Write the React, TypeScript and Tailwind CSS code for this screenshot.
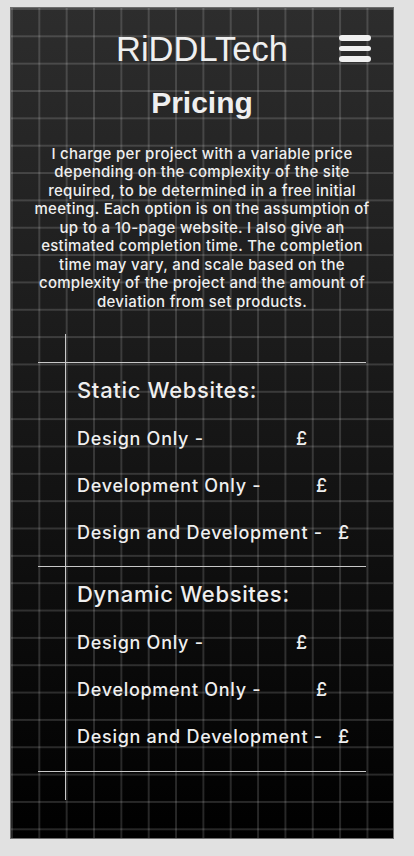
import React from "react";

const line = "border-[#c8c8c8]";

const PriceRow = ({ label, width, first }: { label: string; width: string; first?: boolean }) => (
  <div className={`flex items-center h-[28px] text-[18px] font-medium tracking-[0.04em] ${first ? "mt-[20px]" : "mt-[19px]"}`}>
    <span className={`${width} shrink-0 whitespace-nowrap`}>{label}</span>
    <span>£</span>
  </div>
);

const Section = ({ title, pb }: { title: string; pb: string }) => (
  <div className={`border-t ${line}`}>
    <div className={`ml-[27px] border-l ${line} pl-[11px] pt-[13px] ${pb}`}>
      <h2 className="h-[28px] flex items-center text-[22px] font-medium tracking-[0.03em]">{title}</h2>
      <PriceRow label="Design Only -" width="w-[219px]" first />
      <PriceRow label="Development Only -" width="w-[239px]" />
      <PriceRow label="Design and Development -" width="w-[261px]" />
    </div>
  </div>
);

export default function App() {
  return (
    <div className="min-h-screen bg-[#e1e1e1] pt-[7px] pl-[10px]">
      <div
        className="relative w-[384px] h-[832px] border border-[#6e6e6e] text-[#efefef] bg-[linear-gradient(rgba(255,255,255,0.15)_2px,transparent_2px),linear-gradient(90deg,rgba(255,255,255,0.15)_2px,transparent_2px),linear-gradient(#2d2d2d,#000)] bg-[size:27.35px_27.35px,27.35px_27.35px,100%_100%]"
        style={{ fontFamily: "Inter, 'Noto Sans', sans-serif" }}
      >
        {/* Header */}
        <header className="pt-[24px] text-center">
          <h1 className="text-[34.5px] leading-none font-['Liberation_Sans',Arial,sans-serif]">RiDDLTech</h1>
          <button className="absolute top-[27px] right-[22px] flex flex-col gap-[5px]">
            <span className="block w-[32px] h-[5.5px] rounded-full bg-[#f0f0f0]" />
            <span className="block w-[32px] h-[5.5px] rounded-full bg-[#f0f0f0]" />
            <span className="block w-[32px] h-[5.5px] rounded-full bg-[#f0f0f0]" />
          </button>
        </header>

        {/* Title */}
        <h2 className="mt-[21px] text-center text-[30px] leading-none font-bold font-['Liberation_Sans',Arial,sans-serif]">
          Pricing
        </h2>

        {/* Intro */}
        <p className="mt-[27px] px-[6px] text-center text-[15px] leading-[18.5px] font-medium tracking-[0.02em]">
          I charge per project with a variable price
          <br />
          depending on the complexity of the site
          <br />
          required, to be determined in a free initial
          <br />
          meeting. Each option is on the assumption of
          <br />
          up to a 10-page website. I also give an
          <br />
          estimated completion time. The completion
          <br />
          time may vary, and scale based on the
          <br />
          complexity of the project and the amount of
          <br />
          deviation from set products.
        </p>

        {/* Price table */}
        <div className="mt-[23px] ml-[27px] w-[328px]">
          <div className={`h-[28px] ml-[27px] border-l ${line}`} />
          <Section title="Static Websites:" pb="pb-[20px]" />
          <Section title="Dynamic Websites:" pb="pb-[21px]" />
          <div className={`border-t ${line}`}>
            <div className={`h-[28px] ml-[27px] border-l ${line}`} />
          </div>
        </div>
      </div>
    </div>
  );
}
